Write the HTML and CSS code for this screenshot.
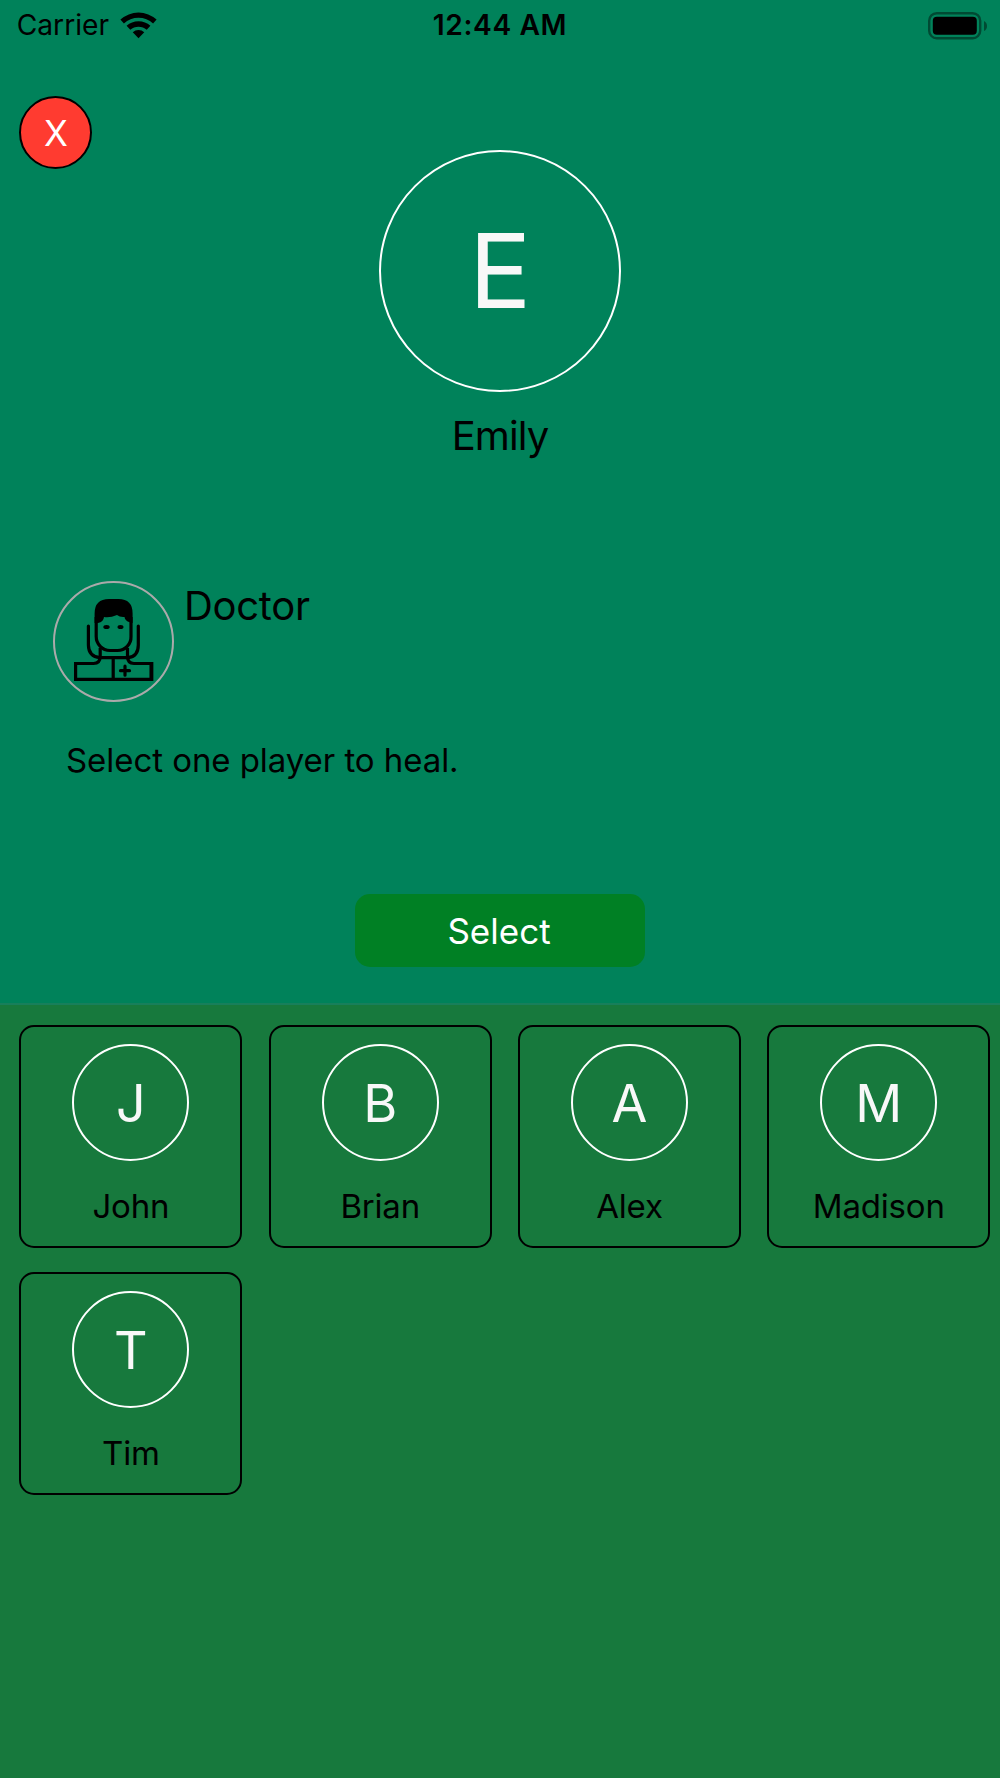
FILE: index.html
```html
<!DOCTYPE html>
<html lang="en">
<head>
<meta charset="utf-8">
<title>Doctor</title>
<link rel="stylesheet" href="styles.css">
</head>
<body>
<main class="screen">
  <section class="top">
    <header class="status">
      <div class="status-left">
        <span class="carrier">Carrier</span>
        <svg class="wifi" viewBox="0 0 36 27" width="37" height="27" preserveAspectRatio="none"><path d="M.4 7.6A25.6 25.6 0 0 1 35.6 7.6L32.2 11.4A20.4 20.4 0 0 0 3.8 11.4ZM6.4 13.8A17.2 17.2 0 0 1 29.6 13.8L26 17.8A11.8 11.8 0 0 0 10 17.8ZM12.4 20.2A8.4 8.4 0 0 1 23.6 20.2L18 26.2Z"/></svg>
      </div>
      <time class="clock">12:44 AM</time>
      <svg class="battery" viewBox="0 0 60 28" width="60" height="28"><rect x="1.2" y="1.2" width="51" height="25" rx="7.5" fill="none" stroke="#004a33" stroke-width="2.4"/><rect x="4.8" y="4.8" width="44" height="18" rx="4"/><path d="M56 9Q59 10.500 59 14T56 19Z" fill="#004a33"/></svg>
    </header>
    <button class="close">X</button>
    <div class="profile">
      <div class="avatar">E</div>
      <div class="name">Emily</div>
    </div>
    <div class="role">
      <div class="role-icon">
        <svg viewBox="0 0 80 82" width="80" height="82" fill="none" stroke="#000" stroke-width="3.2">
          <path d="M22.200 18V37.500A14 14 0 0 0 36 51.500H43.500A13.500 13.500 0 0 0 57 37.500V18"/>
          <path d="M20.600 24V14.500Q20.600 0 35 0H44.500Q58.600 0 58.600 14.500V24L55 23Q51 21.500 50.500 18Q46 18.500 43 16Q36 19 30 18Q29.500 23 24 24Z" fill="#000" stroke="none"/>
          <ellipse cx="32.500" cy="28" rx="3.200" ry="2" fill="#000" stroke="none"/><ellipse cx="46.500" cy="28" rx="3" ry="2" fill="#000" stroke="none"/>
          <path d="M14.400 27V46Q14.500 57.500 26 58.700H54Q64.300 57.500 64.300 46V27" stroke-linecap="round"/>
          <path d="M26.200 49V57Q26.200 64.500 19.500 64.500H1.600V80.400H77.500V64.500H60Q53.500 64.500 53.500 57V49M39.200 58.500V80"/>
          <path d="M77.400 63V82" stroke-width="3.800"/>
          <path d="M46.500 71.700H55.500M51 67.200V76.200" stroke-linecap="round"/>
        </svg>
      </div>
      <div class="role-name">Doctor</div>
    </div>
    <p class="hint">Select one player to heal.</p>
    <button class="select">Select</button>
  </section>
  <section class="players">
    <article class="card"><div class="initial">J</div><div class="player">John</div></article>
    <article class="card"><div class="initial">B</div><div class="player">Brian</div></article>
    <article class="card"><div class="initial">A</div><div class="player">Alex</div></article>
    <article class="card"><div class="initial">M</div><div class="player">Madison</div></article>
    <article class="card"><div class="initial">T</div><div class="player">Tim</div></article>
  </section>
</main>
</body>
</html>
```
FILE: styles.css
```css
* { box-sizing: border-box; }
body { margin: 0; font-family: Inter, "Liberation Sans", sans-serif; color: #000; }
.screen { width: 1000px; height: 1778px; background: #17793d; overflow: hidden; }
.top { height: 1005px; background: #00825a; border-bottom: 2px solid #187f5b; }
.status { display: grid; grid-template-columns: 1fr auto 1fr; height: 50px; padding: 0 12px; align-items: center; font-size: 28.2px; line-height: 51px; }
.status-left { display: flex; align-items: center; gap: 11px; padding-left: 4.700px; }
.clock { font-weight: 600; letter-spacing: .6px; }
.battery { justify-self: end; }
.close { display: block; width: 73px; height: 73px; margin: 46px 0 0 19px; padding: 0 0 0 1px; border: 2px solid #000; border-radius: 50%; background: #ff3b30; color: #fff; font: 35px/71px Inter, sans-serif; }
.profile { display: flex; flex-direction: column; align-items: center; margin-top: -19px; }
.avatar { width: 242px; height: 242px; border: 2px solid #fff; border-radius: 50%; color: #f8f8f8; font-size: 103.5px; line-height: 238px; text-align: center; }
.name { margin-top: 19px; font-size: 40px; line-height: 50px; letter-spacing: -.9px; }
.role { display: flex; gap: 10px; margin: 120px 0 0 53px; }
.role-icon { display: flex; justify-content: center; width: 121px; height: 121px; padding-top: 16px; border: 2px solid #aaa; border-radius: 50%; }
.role-name { font-size: 40px; line-height: 50px; letter-spacing: -.3px; }
.hint { margin: 37px 0 0 66px; font-size: 33px; line-height: 42px; letter-spacing: -.06px; }
.select { display: block; width: 290px; height: 73px; margin: 113px auto 0; padding: 0 2px 0 0; border: 0; border-radius: 15px; background: #008024; color: #fff; font: 35px/74px Inter, sans-serif; }
.players { display: grid; grid-template-columns: repeat(4, 223px); column-gap: 26.300px; row-gap: 24px; padding: 20px 0 0 19.400px; }
.card { display: flex; flex-direction: column; align-items: center; height: 223px; padding-top: 17px; border: 2px solid #000; border-radius: 15px; }
.initial { width: 117px; height: 117px; border: 2px solid #fff; border-radius: 50%; color: #f8f8f8; font-size: 52px; line-height: 115px; text-align: center; }
.player { margin-top: 25px; font-size: 33px; line-height: 40px; letter-spacing: -.2px; }
```
